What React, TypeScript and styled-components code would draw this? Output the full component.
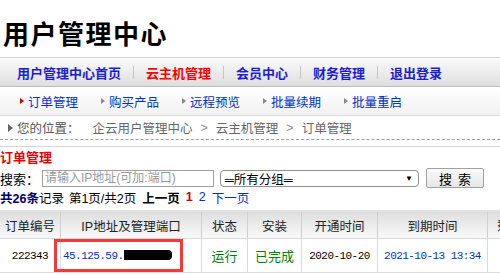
import React from 'react';
import styled, { createGlobalStyle } from 'styled-components';

const GlobalStyle = createGlobalStyle`
  html, body {
    margin: 0;
    padding: 0;
    overflow: hidden;
    background: #fff;
  }
  body {
    font-family: "Liberation Sans", "Noto Sans CJK SC", sans-serif;
    font-size: 12px;
    color: #000;
  }
`;

const Page = styled.div`
  width: 500px;
  overflow: hidden;
`;

const Header = styled.header`
  height: 57px;
  box-sizing: border-box;
  padding: 19px 0 0 3px;
`;

const Title = styled.h1`
  margin: 0;
  font-size: 26px;
  line-height: 32px;
  font-weight: bold;
  letter-spacing: 1.5px;
`;

const NavBar = styled.nav`
  height: 30px;
  box-sizing: border-box;
  display: flex;
  align-items: center;
  padding-left: 5px;
  border-top: 1px solid #d2d2d2;
  border-bottom: 1px solid #bcbcbc;
  background: linear-gradient(to bottom, #fbfbfb, #dedede);
`;

const NavItem = styled.a<{ $active?: boolean }>`
  padding: 0 12px;
  font-size: 13px;
  font-weight: bold;
  color: ${p => (p.$active ? '#ff0000' : '#1c1cd0')};
  text-decoration: none;
`;

const NavSep = styled.span`
  width: 1px;
  height: 13px;
  background: #c6c6c6;
`;

const SubNav = styled.div`
  height: 29px;
  box-sizing: border-box;
  display: flex;
  align-items: center;
  padding-left: 20px;
  border-bottom: 1px solid #dcdcdc;
  background: linear-gradient(to bottom, #ffffff, #f1f1f1);
`;

const SubItem = styled.a`
  width: 81px;
  display: flex;
  align-items: center;
  gap: 4px;
  font-size: 12.5px;
  color: #0030cc;
  text-decoration: none;
`;

const Arrow = styled.span<{ $color: string; $size?: number }>`
  width: 0;
  height: 0;
  border-left: ${p => (p.$size ?? 4)}px solid ${p => p.$color};
  border-top: ${p => (p.$size ?? 4) - 0.5}px solid transparent;
  border-bottom: ${p => (p.$size ?? 4) - 0.5}px solid transparent;
`;

const Crumbs = styled.div`
  height: 23px;
  display: flex;
  align-items: center;
  padding-left: 8px;
  font-size: 12.5px;
  color: #666;
  border-bottom: 1px dashed #9c9c9c;
`;

const CrumbLabel = styled.span`
  margin: 0 13px 0 4px;
  color: #555;
`;

const CrumbSep = styled.span`
  margin: 0 8px;
  color: #888;
`;

const Rule = styled.div`
  margin-top: 6px;
  height: 1px;
  background: #d6d6d6;
`;

const SectionTitle = styled.h2`
  margin: 3px 0 0;
  font-size: 13px;
  line-height: 16px;
  font-weight: bold;
  color: #ee0000;
`;

const SearchRow = styled.div`
  display: flex;
  align-items: center;
  height: 20px;
  margin-top: 2px;
  font-size: 13px;
`;

const SearchInput = styled.div`
  margin-left: 3px;
  width: 172px;
  height: 17px;
  box-sizing: border-box;
  border: 1px solid #a0a0a0;
  padding-left: 2px;
  font-size: 12px;
  line-height: 15px;
  color: #999;
  white-space: nowrap;
  overflow: hidden;
`;

const GroupSelect = styled.div`
  margin-left: 6px;
  width: 199px;
  height: 17px;
  box-sizing: border-box;
  border: 1px solid #909090;
  border-radius: 4px;
  display: flex;
  align-items: center;
  justify-content: space-between;
  padding: 0 5px 0 4px;
  font-size: 12.5px;
`;

const SelectArrow = styled.span`
  font-size: 8px;
`;

const SearchButton = styled.button`
  margin-left: 7px;
  width: 58px;
  height: 20px;
  border: 1px solid #a0a0a0;
  border-radius: 2px;
  background: linear-gradient(to bottom, #fafafa, #e6e6e6);
  font-family: inherit;
  font-size: 13px;
  letter-spacing: 6px;
  padding: 0 0 0 6px;
  color: #000;
`;

const Pager = styled.div`
  display: flex;
  align-items: center;
  height: 16px;
  margin-top: 1px;
  font-size: 12.5px;
  white-space: nowrap;
`;

const PagerText = styled.span<{ $color?: string; $bold?: boolean; $gap?: number }>`
  color: ${p => p.$color ?? '#000'};
  font-weight: ${p => (p.$bold ? 'bold' : 'normal')};
  margin-left: ${p => p.$gap ?? 0}px;
`;

const Table = styled.table`
  margin-top: 5px;
  border-collapse: collapse;
  table-layout: fixed;
  width: 550px;
  border-top: 2px solid #e2e2e2;
`;

const Th = styled.th<{ $w: number }>`
  width: ${p => p.$w}px;
  height: 26px;
  padding: 0;
  font-size: 12.5px;
  font-weight: normal;
  color: #222;
  text-align: center;
  white-space: nowrap;
  overflow: hidden;
  background: linear-gradient(to bottom, #dedede, #f8f8f8);
  border-right: 1px solid #cfcfcf;
  border-bottom: 1px solid #d8d8d8;
`;

const Td = styled.td<{ $color?: string; $mono?: boolean }>`
  height: 33px;
  padding: 0;
  text-align: center;
  white-space: nowrap;
  overflow: hidden;
  color: ${p => p.$color ?? '#000'};
  font-family: ${p => (p.$mono ? '"Liberation Mono", monospace' : 'inherit')};
  font-size: ${p => (p.$mono ? '11px' : '13px')};
  letter-spacing: ${p => (p.$mono ? '-0.55px' : '0')};
  border-right: 1px solid #dadada;
  border-bottom: 1px solid #dadada;
`;

const IpCell = styled(Td)`
  position: relative;
  overflow: visible;
  text-align: left;
  padding-left: 2px;
`;

const Redacted = styled.span`
  display: inline-block;
  vertical-align: -1px;
  width: 48px;
  height: 10px;
  background: #000;
  border-radius: 0 4px 4px 0;
`;

const Highlight = styled.span`
  position: absolute;
  left: -7px;
  top: 0;
  width: 129px;
  height: 33px;
  box-sizing: border-box;
  border: 3px solid #f23a3a;
`;

const navItems = [
  { label: '用户管理中心首页' },
  { label: '云主机管理', active: true },
  { label: '会员中心' },
  { label: '财务管理' },
  { label: '退出登录' },
];

const subItems = ['订单管理', '购买产品', '远程预览', '批量续期', '批量重启'];

const columns = [
  { label: '订单编号', w: 60 },
  { label: 'IP地址及管理端口', w: 140 },
  { label: '状态', w: 45 },
  { label: '安装', w: 53 },
  { label: '开通时间', w: 75 },
  { label: '到期时间', w: 109 },
  { label: '剩余天数', w: 68 },
];

export default function App() {
  return (
    <Page>
      <GlobalStyle />
      <Header>
        <Title>用户管理中心</Title>
      </Header>

      <NavBar>
        {navItems.map((item, i) => (
          <React.Fragment key={item.label}>
            {i > 0 && <NavSep />}
            <NavItem $active={item.active}>{item.label}</NavItem>
          </React.Fragment>
        ))}
      </NavBar>

      <SubNav>
        {subItems.map((label, i) => (
          <SubItem key={label}>
            <Arrow $color={i === 0 ? '#d00000' : '#888'} />
            {label}
          </SubItem>
        ))}
      </SubNav>

      <Crumbs>
        <Arrow $color="#666" $size={5} />
        <CrumbLabel>您的位置：</CrumbLabel>
        企云用户管理中心
        <CrumbSep>&gt;</CrumbSep>
        云主机管理
        <CrumbSep>&gt;</CrumbSep>
        订单管理
      </Crumbs>
      <Rule />

      <SectionTitle>订单管理</SectionTitle>

      <SearchRow>
        搜索：
        <SearchInput>请输入IP地址(可加:端口)</SearchInput>
        <GroupSelect>
          <span>═所有分组═</span>
          <SelectArrow>▼</SelectArrow>
        </GroupSelect>
        <SearchButton>搜索</SearchButton>
      </SearchRow>

      <Pager>
        <PagerText $color="#000066" $bold>共26条</PagerText>
        <PagerText>记录</PagerText>
        <PagerText $gap={5}>第1页/共2页</PagerText>
        <PagerText $gap={6} $bold>上一页</PagerText>
        <PagerText $gap={6} $color="#cc0000" $bold>1</PagerText>
        <PagerText $gap={6} $color="#0030cc">2</PagerText>
        <PagerText $gap={6} $color="#0030cc">下一页</PagerText>
      </Pager>

      <Table>
        <thead>
          <tr>
            {columns.map(c => (
              <Th key={c.label} $w={c.w}>{c.label}</Th>
            ))}
          </tr>
        </thead>
        <tbody>
          <tr>
            <Td $mono>222343</Td>
            <IpCell $mono $color="#0030cc">
              45.125.59.<Redacted />
              <Highlight />
            </IpCell>
            <Td $color="#008000">运行</Td>
            <Td $color="#008000">已完成</Td>
            <Td $mono>2020-10-20</Td>
            <Td $mono $color="#0030cc">2021-10-13 13:34</Td>
            <Td $mono>320</Td>
          </tr>
        </tbody>
      </Table>
    </Page>
  );
}
